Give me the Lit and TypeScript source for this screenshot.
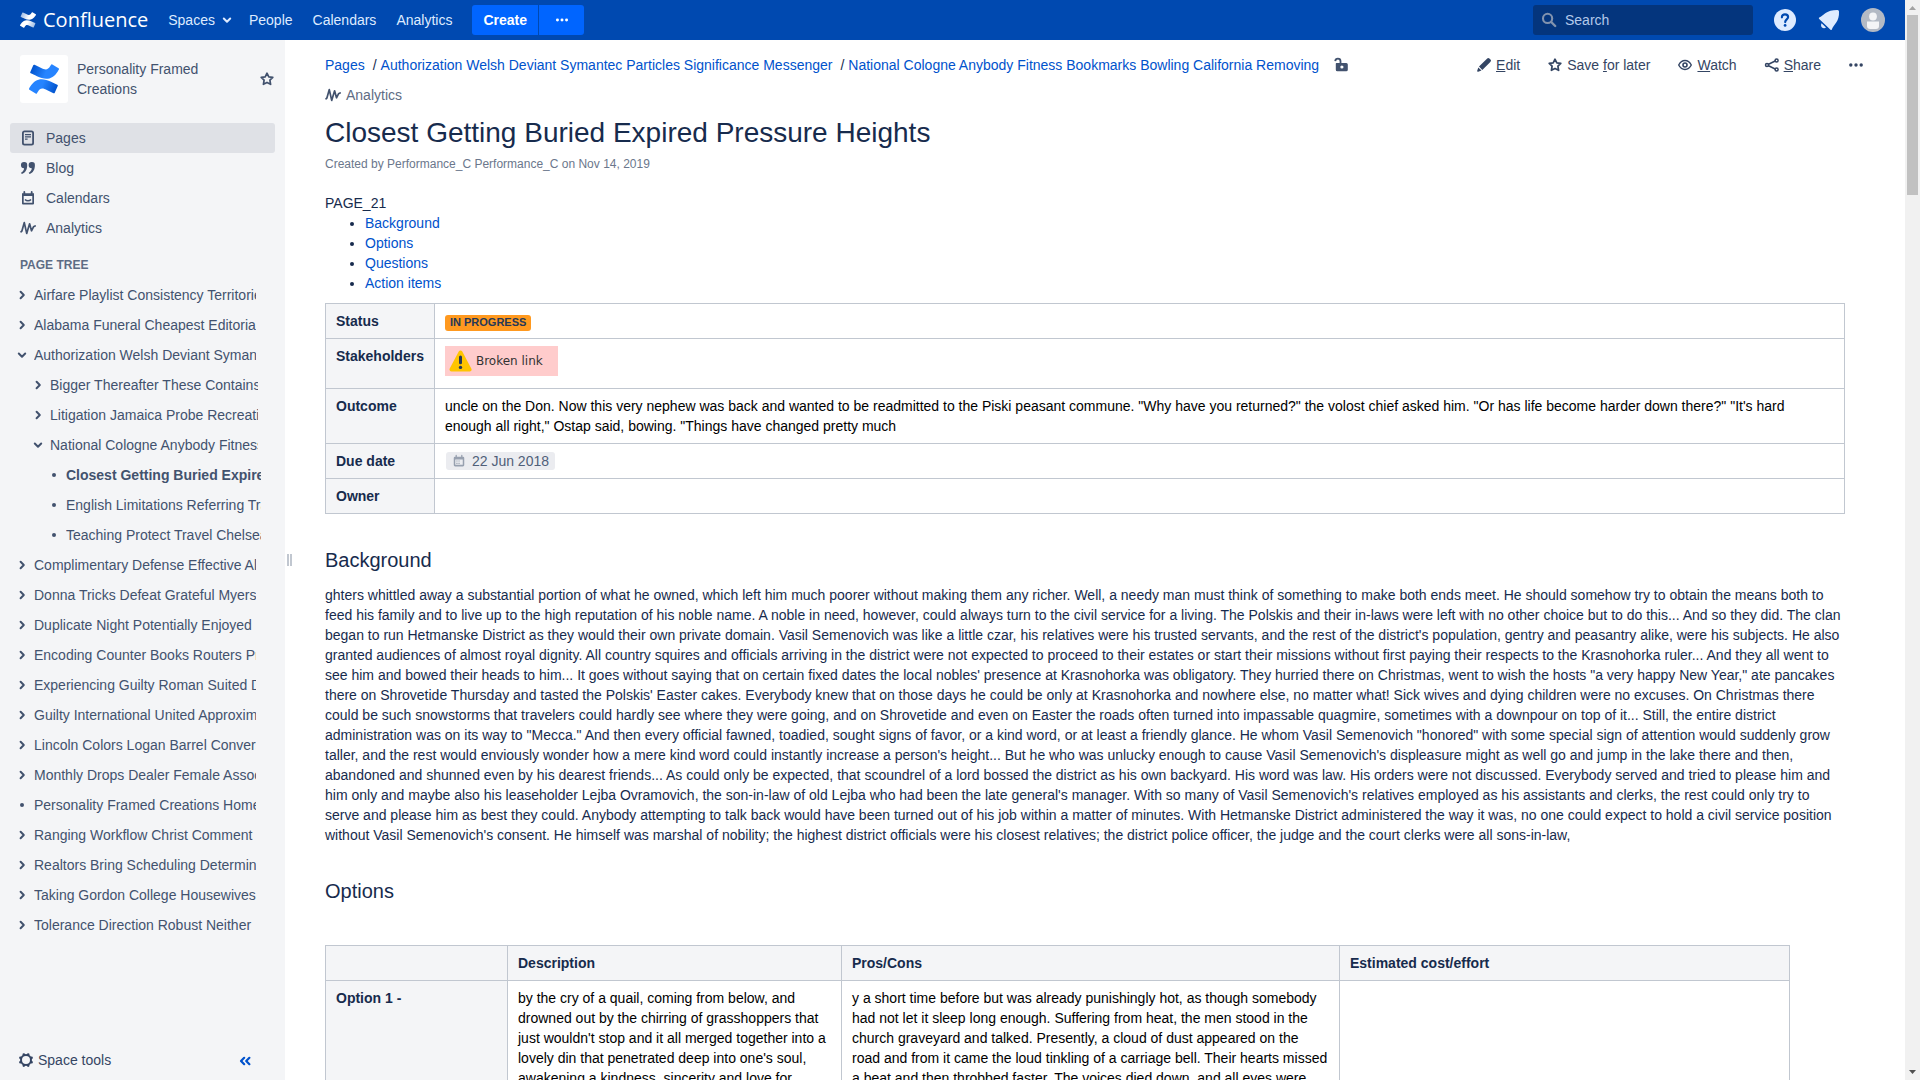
import { LitElement, html, css, svg, nothing } from "lit";
import { customElement, property } from "lit/decorators.js";

type TreeNode = { title: string; level: 1 | 2 | 3; state: "closed" | "open" | "leaf"; current?: boolean };

const TREE: TreeNode[] = [
  { title: "Airfare Playlist Consistency Territories", level: 1, state: "closed" },
  { title: "Alabama Funeral Cheapest Editorials", level: 1, state: "closed" },
  { title: "Authorization Welsh Deviant Symantec", level: 1, state: "open" },
  { title: "Bigger Thereafter These Contains", level: 2, state: "closed" },
  { title: "Litigation Jamaica Probe Recreation", level: 2, state: "closed" },
  { title: "National Cologne Anybody Fitness", level: 2, state: "open" },
  { title: "Closest Getting Buried Expired", level: 3, state: "leaf", current: true },
  { title: "English Limitations Referring Tracks", level: 3, state: "leaf" },
  { title: "Teaching Protect Travel Chelsea", level: 3, state: "leaf" },
  { title: "Complimentary Defense Effective Albums", level: 1, state: "closed" },
  { title: "Donna Tricks Defeat Grateful Myers", level: 1, state: "closed" },
  { title: "Duplicate Night Potentially Enjoyed", level: 1, state: "closed" },
  { title: "Encoding Counter Books Routers Prints", level: 1, state: "closed" },
  { title: "Experiencing Guilty Roman Suited Days", level: 1, state: "closed" },
  { title: "Guilty International United Approximate", level: 1, state: "closed" },
  { title: "Lincoln Colors Logan Barrel Conversion", level: 1, state: "closed" },
  { title: "Monthly Drops Dealer Female Associate", level: 1, state: "closed" },
  { title: "Personality Framed Creations Home", level: 1, state: "leaf" },
  { title: "Ranging Workflow Christ Comment", level: 1, state: "closed" },
  { title: "Realtors Bring Scheduling Determine", level: 1, state: "closed" },
  { title: "Taking Gordon College Housewives", level: 1, state: "closed" },
  { title: "Tolerance Direction Robust Neither", level: 1, state: "closed" },
];

const BACKGROUND = `ghters whittled away a substantial portion of what he owned, which left him much poorer without making them any richer. Well, a needy man must think of something to make both ends meet. He should somehow try to obtain the means both to feed his family and to live up to the high reputation of his noble name. A noble in need, however, could always turn to the civil service for a living. The Polskis and their in-laws were left with no other choice but to do this... And so they did. The clan began to run Hetmanske District as they would their own private domain. Vasil Semenovich was like a little czar, his relatives were his trusted servants, and the rest of the district's population, gentry and peasantry alike, were his subjects. He also granted audiences of almost royal dignity. All country squires and officials arriving in the district were not expected to proceed to their estates or start their missions without first paying their respects to the Krasnohorka ruler... And they all went to see him and bowed their heads to him... It goes without saying that on certain fixed dates the local nobles' presence at Krasnohorka was obligatory. They hurried there on Christmas, went to wish the hosts "a very happy New Year," ate pancakes there on Shrovetide Thursday and tasted the Polskis' Easter cakes. Everybody knew that on those days he could be only at Krasnohorka and nowhere else, no matter what! Sick wives and dying children were no excuses. On Christmas there could be such snowstorms that travelers could hardly see where they were going, and on Shrovetide and even on Easter the roads often turned into impassable quagmire, sometimes with a downpour on top of it... Still, the entire district administration was on its way to "Mecca." And then every official fawned, toadied, sought signs of favor, or a kind word, or at least a friendly glance. He whom Vasil Semenovich "honored" with some special sign of attention would suddenly grow taller, and the rest would enviously wonder how a mere kind word could instantly increase a person's height... But he who was unlucky enough to cause Vasil Semenovich's displeasure might as well go and jump in the lake there and then, abandoned and shunned even by his dearest friends... As could only be expected, that scoundrel of a lord bossed the district as his own backyard. His word was law. His orders were not discussed. Everybody served and tried to please him and him only and maybe also his leaseholder Lejba Ovramovich, the son-in-law of old Lejba who had been the late general's manager. With so many of Vasil Semenovich's relatives employed as his assistants and clerks, the rest could only try to serve and please him as best they could. Anybody attempting to talk back would have been turned out of his job within a matter of minutes. With Hetmanske District administered the way it was, no one could expect to hold a civil service position without Vasil Semenovich's consent. He himself was marshal of nobility; the highest district officials were his closest relatives; the district police officer, the judge and the court clerks were all sons-in-law,`;

const OUTCOME = `uncle on the Don. Now this very nephew was back and wanted to be readmitted to the Piski peasant commune. "Why have you returned?" the volost chief asked him. "Or has life become harder down there?" "It's hard enough all right," Ostap said, bowing. "Things have changed pretty much`;

const DESCRIPTION = `by the cry of a quail, coming from below, and drowned out by the chirring of grasshoppers that just wouldn't stop and it all merged together into a lovely din that penetrated deep into one's soul, awakening a kindness, sincerity and love for`;

const PROS_CONS = `y a short time before but was already punishingly hot, as though somebody had not let it sleep long enough. Suffering from heat, the men stood in the church graveyard and talked. Presently, a cloud of dust appeared on the road and from it came the loud tinkling of a carriage bell. Their hearts missed a beat and then throbbed faster. The voices died down, and all eyes were`;

const ICONS = {
  chevronDown: svg`<path d="M4.8 6.5L8 9.7l3.2-3.2" fill="none" stroke="currentColor" stroke-width="2" stroke-linecap="round" stroke-linejoin="round"/>`,
  chevronRight: svg`<path d="M6.6 4.8L9.8 8l-3.2 3.2" fill="none" stroke="currentColor" stroke-width="2" stroke-linecap="round" stroke-linejoin="round"/>`,
  bullet: svg`<circle cx="8" cy="8" r="2" fill="currentColor"/>`,
  more: svg`<circle cx="2.8" cy="8" r="1.7" fill="currentColor"/><circle cx="8" cy="8" r="1.7" fill="currentColor"/><circle cx="13.2" cy="8" r="1.7" fill="currentColor"/>`,
  search: svg`<circle cx="6.6" cy="6.4" r="4.6" fill="none" stroke="currentColor" stroke-width="2.1"/><path d="M10.2 10l4 4" stroke="currentColor" stroke-width="2.4" stroke-linecap="round"/>`,
  star: svg`<path d="M8 2.2l1.800 3.600 4 .6-2.900 2.800.7 4.100L8 11.400l-3.600 1.900.7-4.100-2.900-2.800 4-.6z" fill="none" stroke="currentColor" stroke-width="1.700" stroke-linejoin="round"/>`,
  page: svg`<rect x="2.9" y="1.4" width="10.2" height="13.2" rx="1.6" fill="none" stroke="currentColor" stroke-width="1.8"/><path d="M5 4.6h6M5 6.9h6M5 9.2h2.6" stroke="currentColor" stroke-width="1.2"/>`,
  quote: svg`<path d="M4 2a3.1 3.1 0 0 1 3.2 3.3C7.2 9.700 5.300 12.900 1.800 14l-.8-1.200C2.900 11.600 3.900 10.200 4.100 8.200A3.100 3.100 0 0 1 4 2zM11.700 2a3.100 3.100 0 0 1 3.200 3.300c0 4.400-1.900 7.600-5.400 8.700l-.8-1.200c1.900-1.200 2.900-2.600 3.100-4.600A3.100 3.100 0 0 1 11.700 2z" fill="currentColor"/>`,
  calendar: svg`<path d="M2 3.200h12v10.300a1 1 0 0 1-1 1H3a1 1 0 0 1-1-1zM3.700 6v6.800h8.600V6z" fill="currentColor" fill-rule="evenodd"/><path d="M4.300 2v2M11.700 2v2" stroke="currentColor" stroke-width="1.8" stroke-linecap="round"/><path d="M5 9.400c1.600 1.700 4.400 1.700 6 0" fill="none" stroke="currentColor" stroke-width="1.5"/>`,
  analytics: svg`<path d="M1 11.800l.9-.8L4.300 2.600 6.700 13.400 9.600 3.800l1.900 7 2-4 1.600-.8" fill="none" stroke="currentColor" stroke-width="1.700" stroke-linejoin="round" stroke-linecap="round"/>`,
  gear: svg`<circle cx="8" cy="8" r="5" fill="none" stroke="currentColor" stroke-width="2"/><g stroke="currentColor" stroke-width="2.6" stroke-linecap="round"><path d="M5.800 2.500v.2M10.200 2.500v.2M5.800 13.400v.2M10.200 13.400v.2M2.400 5.800h.2M2.400 10.200h.2M13.400 5.800h.2M13.400 10.200h.2"/></g>`,
  collapse: svg`<path d="M7.200 5.800L4 9l3.200 3.200M12.400 5.800L9.200 9l3.200 3.200" fill="none" stroke="currentColor" stroke-width="2.2" stroke-linecap="round" stroke-linejoin="round"/>`,
  unlocked: svg`<path d="M3.300 6h10a1.500 1.500 0 0 1 1.500 1.500v5.200a1.600 1.600 0 0 1-1.600 1.600H4.400a1.600 1.600 0 0 1-1.600-1.600V6.500z" fill="currentColor"/><path d="M2.200 4.200C2.400 2.600 3.500 1.700 4.900 1.700S7.500 2.700 7.500 4.200V6.500" fill="none" stroke="currentColor" stroke-width="1.8"/><circle cx="8.900" cy="10" r="1.600" fill="#fff"/>`,
  edit: svg`<path d="M10.200 2.400l1-.9a1.600 1.600 0 0 1 2.200 0l1.100 1.100a1.600 1.600 0 0 1 0 2.200L13.600 5.800 6.300 13 3 9.600zM2.300 10.400l3.200 3.200-3.300 1.200a.8.8 0 0 1-1-1z" fill="currentColor"/>`,
  watch: svg`<path d="M1.700 8C3.200 5.100 5.400 3.500 8 3.500S12.800 5.100 14.300 8C12.800 10.900 10.600 12.500 8 12.500S3.200 10.900 1.700 8z" fill="none" stroke="currentColor" stroke-width="1.400" stroke-linejoin="round"/><circle cx="8" cy="8" r="2" fill="none" stroke="currentColor" stroke-width="1.600"/>`,
  share: svg`<path d="M12.700 3.300L3 8l9.700 4.700" fill="none" stroke="currentColor" stroke-width="1.600"/><g fill="#fff" stroke="currentColor" stroke-width="1.500"><circle cx="12.600" cy="3.500" r="1.500"/><circle cx="3" cy="8" r="1.500"/><circle cx="12.600" cy="12.500" r="1.500"/></g>`,
  date: svg`<path d="M2 4.500a1.500 1.500 0 0 1 1.500-1.500h9A1.500 1.500 0 0 1 14 4.500v8.200a1.500 1.500 0 0 1-1.500 1.500h-9A1.500 1.500 0 0 1 2 12.700zM3.700 6.300v6.100h8.600V6.300z" fill="currentColor" fill-rule="evenodd"/><path d="M4.800 1.700v2.200M11.200 1.700v2.200" stroke="currentColor" stroke-width="1.5" stroke-linecap="round"/><path d="M5 8h1.300M7.400 8h1.300M5 10.600h1.300M7.400 10.600h1.300" stroke="currentColor" stroke-width="1.4"/>`,
};

const MARK_LOWER = "M.87 18.257c-.248.382-.53.875-.763 1.245a.764.764 0 0 0 .255 1.04l4.965 3.054a.764.764 0 0 0 1.058-.26c.199-.332.454-.763.733-1.221 1.967-3.247 3.945-2.853 7.508-1.146l4.957 2.337a.764.764 0 0 0 1.028-.382l2.364-5.346a.764.764 0 0 0-.382-1 599.851 599.851 0 0 1-4.965-2.361C10.911 10.97 5.224 11.185.87 18.257z";
const MARK_UPPER = "M23.131 5.743c.249-.405.531-.875.764-1.25a.764.764 0 0 0-.256-1.034L18.675.404a.764.764 0 0 0-1.058.26c-.195.335-.451.763-.734 1.225-1.966 3.246-3.945 2.85-7.508 1.146L4.437.694a.764.764 0 0 0-1.027.382L1.046 6.422a.764.764 0 0 0 .382 1c1.039.49 3.105 1.467 4.965 2.361 6.698 3.246 12.392 3.029 16.738-4.04z";

@customElement("ui-icon")
export class UiIcon extends LitElement {
  @property() name: keyof typeof ICONS = "bullet";

  static styles = css`
    :host { display: inline-block; flex: none; width: 16px; height: 16px; }
    svg { display: block; width: 100%; height: 100%; }
  `;

  render() {
    return html`<svg viewBox="0 0 16 16" aria-hidden="true">${ICONS[this.name]}</svg>`;
  }
}

@customElement("product-mark")
export class ProductMark extends LitElement {
  @property() tone: "blue" | "white" = "blue";

  static styles = css`
    :host { display: block; flex: none; }
    svg { display: block; width: 100%; height: 100%; }
  `;

  render() {
    const [solid, shade] = this.tone === "blue" ? ["#2684ff", "#0052cc"] : ["#ffffff", "#9dbbe4"];
    return html`<svg viewBox="0 0 24 24" aria-hidden="true">
      <defs>
        <linearGradient id="lower" x1="24" y1="21" x2="8" y2="14" gradientUnits="userSpaceOnUse">
          <stop offset="0.1" stop-color=${shade} /><stop offset="0.8" stop-color=${solid} />
        </linearGradient>
        <linearGradient id="upper" x1="0" y1="3" x2="16" y2="10" gradientUnits="userSpaceOnUse">
          <stop offset="0.1" stop-color=${shade} /><stop offset="0.8" stop-color=${solid} />
        </linearGradient>
      </defs>
      <path d=${MARK_LOWER} fill="url(#lower)" />
      <path d=${MARK_UPPER} fill="url(#upper)" />
    </svg>`;
  }
}

@customElement("app-header")
export class AppHeader extends LitElement {
  static styles = css`
    :host { display: flex; align-items: center; height: 40px; padding: 0 20px; background: #0049b0; color: #deebff; }
    a { color: inherit; text-decoration: none; }
    button { font: inherit; border: 0; margin: 0; cursor: pointer; }
    .brand { display: flex; align-items: center; gap: 7px; margin-right: 10px; color: #fff; font: 20px/40px "Open Sans", sans-serif; }
    .brand product-mark { width: 16px; height: 16px; }
    nav { display: flex; align-items: center; }
    .link { display: flex; align-items: center; padding: 0 10px; line-height: 30px; background: none; color: inherit; }
    .menu { gap: 4px; padding-right: 4px; }
    .split { display: flex; gap: 1px; margin-left: 10px; }
    .create, .more { display: flex; align-items: center; justify-content: center; height: 30px; background: #0065ff; color: #fff; font-weight: bold; }
    .create { padding: 0 11px; border-radius: 3px 0 0 3px; }
    .more { width: 45px; padding: 0; border-radius: 0 3px 3px 0; }
    .more ui-icon { width: 14px; height: 14px; }
    .tools { display: flex; align-items: center; gap: 20px; margin-left: auto; }
    .search { display: flex; align-items: center; gap: 8px; box-sizing: border-box; width: 220px; height: 30px; padding: 0 8px; border-radius: 3px; background: #04357d; color: #8293ae; }
    .search input { flex: 1; min-width: 0; padding: 0; border: 0; outline: 0; background: none; color: #deebff; font: inherit; }
    .search input::placeholder { color: #b3c9ea; opacity: 1; }
    .round { display: block; width: 24px; height: 24px; padding: 0; background: none; color: inherit; }
    .round svg { display: block; width: 24px; height: 24px; }
  `;

  render() {
    return html`
      <a class="brand" href="#home"><product-mark tone="white"></product-mark>Confluence</a>
      <nav aria-label="Site">
        <button class="link menu">Spaces<ui-icon name="chevronDown"></ui-icon></button>
        <a class="link" href="#people">People</a>
        <a class="link" href="#calendars">Calendars</a>
        <a class="link" href="#analytics">Analytics</a>
      </nav>
      <div class="split">
        <button class="create">Create</button>
        <button class="more" aria-label="Create from template"><ui-icon name="more"></ui-icon></button>
      </div>
      <div class="tools">
        <label class="search">
          <ui-icon name="search"></ui-icon>
          <input type="search" placeholder="Search" aria-label="Search" />
        </label>
        <button class="round" aria-label="Help">
          <svg viewBox="0 0 24 24"><circle cx="12" cy="12" r="11" fill="currentColor" /><path d="M8.900 9.300c0-1.900 1.300-3 3.100-3s3.100 1.100 3.100 2.800c0 2.300-2.900 2.400-2.900 5" fill="none" stroke="#0049b0" stroke-width="2.200" stroke-linecap="round" /><circle cx="12.100" cy="17.400" r="1.400" fill="#0049b0" /></svg>
        </button>
        <button class="round" aria-label="Notifications">
          <svg viewBox="0 0 24 24"><path d="M2.300 9.600C7.500 7 9 2 20.500 2A1.500 1.500 0 0 1 22 3.500C22.500 13.500 17 16 14.800 21.500 14.500 22.200 14 22.200 13.500 21.700L2.200 11C1.700 10.500 1.700 9.900 2.300 9.600z" fill="currentColor" /><path d="M4.600 15.200L9 19.400C8 20.500 6 20.400 5 19.500S3.700 16.300 4.600 15.200z" fill="currentColor" /></svg>
        </button>
        <button class="round" aria-label="Profile">
          <svg viewBox="0 0 24 24"><circle cx="12" cy="12" r="12" fill="#b3bac5" /><circle cx="12" cy="8.500" r="3.900" fill="#f4f5f7" /><path d="M6 13.600h12v4.400a3 3 0 0 1-3 3H9a3 3 0 0 1-3-3z" fill="#f4f5f7" /></svg>
        </button>
      </div>
    `;
  }
}

@customElement("space-sidebar")
export class SpaceSidebar extends LitElement {
  static styles = css`
    :host { display: flex; flex-direction: column; min-height: 0; background: #f4f5f7; color: #42526e; }
    a { color: inherit; text-decoration: none; }
    button { font: inherit; color: inherit; background: none; border: 0; padding: 0; cursor: pointer; }
    ul { list-style: none; margin: 0; padding: 0; }
    .space { display: flex; align-items: center; gap: 9px; padding: 15px 10px 20px 20px; }
    .logo { display: grid; place-items: center; width: 48px; height: 48px; border-radius: 3px; background: #fff; }
    .logo product-mark { width: 30px; height: 30px; }
    .name { flex: 1; max-width: 150px; line-height: 20px; }
    .fav { display: flex; margin-left: auto; }
    .links { padding: 0 10px; }
    .links a { display: flex; align-items: center; gap: 10px; height: 30px; padding: 0 10px; border-radius: 3px; }
    .links .active { background: #dfe1e6; }
    h2 { margin: 0; padding: 12px 20px 5px; font-size: 12px; line-height: 20px; color: #5e6c84; }
    .tree { padding: 0 24px 0 14px; }
    .tree li { display: flex; align-items: center; gap: 4px; height: 30px; padding-right: 5px; }
    .tree .l2 { padding: 0 3px 0 16px; }
    .tree .l3 { padding: 0 0 0 32px; }
    .tree a { flex: 1; overflow: hidden; white-space: nowrap; line-height: 20px; }
    .tree .current { font-weight: bold; }
    .twist { display: flex; }
    .foot { display: flex; align-items: center; justify-content: space-between; margin-top: auto; padding: 10px 32px 10px 18px; color: #344563; line-height: 20px; }
    .tools { display: flex; align-items: center; gap: 4px; }
    .collapse { display: flex; color: #0052cc; }
  `;

  private link(label: string, icon: string, active = false) {
    return html`<li><a class=${active ? "active" : ""} href="#${label}"><ui-icon name=${icon}></ui-icon>${label}</a></li>`;
  }

  private node(n: TreeNode) {
    const icon = n.state === "leaf" ? "bullet" : n.state === "open" ? "chevronDown" : "chevronRight";
    return html`<li class="l${n.level} ${n.current ? "current" : ""}">
      ${n.state === "leaf"
        ? html`<ui-icon name=${icon}></ui-icon>`
        : html`<button class="twist" aria-label="Toggle ${n.title}"><ui-icon name=${icon}></ui-icon></button>`}
      <a href="#page" aria-current=${n.current ? "page" : nothing}>${n.title}</a>
    </li>`;
  }

  render() {
    return html`
      <div class="space">
        <a class="logo" href="#space" aria-label="Space home"><product-mark></product-mark></a>
        <a class="name" href="#space">Personality Framed Creations</a>
        <button class="fav" aria-label="Add to my spaces"><ui-icon name="star"></ui-icon></button>
      </div>
      <ul class="links">
        ${this.link("Pages", "page", true)} ${this.link("Blog", "quote")}
        ${this.link("Calendars", "calendar")} ${this.link("Analytics", "analytics")}
      </ul>
      <h2>PAGE TREE</h2>
      <ul class="tree">${TREE.map((n) => this.node(n))}</ul>
      <div class="foot">
        <button class="tools"><ui-icon name="gear"></ui-icon>Space tools</button>
        <button class="collapse" aria-label="Collapse sidebar"><ui-icon name="collapse"></ui-icon></button>
      </div>
    `;
  }
}

@customElement("page-view")
export class PageView extends LitElement {
  static styles = css`
    :host { display: block; min-width: 0; padding: 15px 60px 0 33px; background: #fff; color: #172b4d; line-height: 20px; }
    a { color: #0052cc; text-decoration: none; }
    .bar { display: flex; align-items: center; justify-content: space-between; margin-right: -19px; }
    .trail { display: flex; align-items: center; gap: 14px; }
    .crumbs { display: flex; align-items: center; list-style: none; margin: 0; padding: 0; }
    .crumbs li + li::before { content: "/"; padding: 0 4px 0 8px; }
    .lock { display: flex; color: #42526e; }
    button { font: inherit; color: inherit; background: none; border: 0; padding: 0; cursor: pointer; }
    .actions { display: flex; align-items: center; gap: 27px; color: #344563; }
    .actions a, .actions button { display: flex; align-items: center; gap: 4px; color: inherit; }
    .insight { display: flex; align-items: center; gap: 5px; margin-top: 10px; color: #5e6c84; }
    .insight ui-icon { color: #42526e; }
    h1 { margin: 12px 0 5px; font-size: 28px; font-weight: normal; line-height: 32px; }
    .byline { font-size: 12px; color: #6b778c; margin-bottom: 19px; }
    p { margin: 0; }
    .toc { margin: 0; padding-left: 40px; }
    table { border-collapse: collapse; }
    th, td { border: 1px solid #c1c7d0; padding: 7px 10px; text-align: left; vertical-align: top; }
    th { background: #f4f5f7; font-weight: bold; }
    td { color: #000; }
    .summary { width: 100%; margin-top: 10px; }
    .summary th { width: 1px; white-space: nowrap; }
    .summary td { height: 20px; }
    .lozenge { display: inline-block; padding: 2px 5px 3px; border-radius: 3px; background: #ff991f; color: #253858; font-size: 11px; font-weight: bold; line-height: 11px; }
    .broken { display: flex; align-items: center; gap: 4px; box-sizing: border-box; width: 113px; height: 30px; margin-bottom: 5px; padding: 0 4px; background: #ffcccc; color: #333; font: 12px/30px "DejaVu Sans", sans-serif; }
    .broken svg { width: 23px; height: 22px; }
    time { display: inline-flex; align-items: center; gap: 6px; height: 18px; margin: 1px 0 0 1px; padding: 0 6px; border-radius: 3px; background: #ebecf0; color: #505f79; vertical-align: top; }
    time ui-icon { width: 14px; height: 14px; color: #97a0af; }
    h2 { margin: 34px 0 13px; font-size: 20px; font-weight: normal; line-height: 24px; }
    .options { table-layout: fixed; width: 1465px; max-width: 100%; margin-top: 42px; }
    .c1 { width: 182px; }
    .c2 { width: 334px; }
    .c3 { width: 498px; }
  `;

  render() {
    return html`
      <div class="bar">
        <div class="trail">
          <ol class="crumbs">
            <li><a href="#pages">Pages</a></li>
            <li><a href="#a">Authorization Welsh Deviant Symantec Particles Significance Messenger</a></li>
            <li><a href="#b">National Cologne Anybody Fitness Bookmarks Bowling California Removing</a></li>
          </ol>
          <button class="lock" aria-label="Unrestricted"><ui-icon name="unlocked"></ui-icon></button>
        </div>
        <div class="actions">
          <a href="#edit"><ui-icon name="edit"></ui-icon><span><u>E</u>dit</span></a>
          <button><ui-icon name="star"></ui-icon><span>Save <u>f</u>or later</span></button>
          <button><ui-icon name="watch"></ui-icon><span><u>W</u>atch</span></button>
          <button><ui-icon name="share"></ui-icon><span><u>S</u>hare</span></button>
          <button aria-label="More actions"><ui-icon name="more"></ui-icon></button>
        </div>
      </div>
      <a class="insight" href="#analytics"><ui-icon name="analytics"></ui-icon>Analytics</a>
      <h1>Closest Getting Buried Expired Pressure Heights</h1>
      <div class="byline">Created by Performance_C Performance_C on Nov 14, 2019</div>
      <p>PAGE_21</p>
      <ul class="toc">
        ${["Background", "Options", "Questions", "Action items"].map((t) => html`<li><a href="#${t}">${t}</a></li>`)}
      </ul>
      <table class="summary">
        <tr><th scope="row">Status</th><td><span class="lozenge">IN PROGRESS</span></td></tr>
        <tr>
          <th scope="row">Stakeholders</th>
          <td>
            <div class="broken">
              <svg viewBox="0 0 23 22" aria-hidden="true"><path d="M11.500 2.500L20.500 19.500h-18z" fill="#ffc400" stroke="#ffc400" stroke-width="4" stroke-linejoin="round" /><path d="M11.500 7v5.800" stroke="#253858" stroke-width="3" stroke-linecap="round" /><circle cx="11.500" cy="17.400" r="1.700" fill="#253858" /></svg>
              Broken link
            </div>
          </td>
        </tr>
        <tr><th scope="row">Outcome</th><td>${OUTCOME}</td></tr>
        <tr><th scope="row">Due date</th><td><time datetime="2018-06-22"><ui-icon name="date"></ui-icon>22 Jun 2018</time></td></tr>
        <tr><th scope="row">Owner</th><td></td></tr>
      </table>
      <h2>Background</h2>
      <p>${BACKGROUND}</p>
      <h2>Options</h2>
      <table class="options">
        <colgroup><col class="c1" /><col class="c2" /><col class="c3" /><col /></colgroup>
        <tr><th></th><th scope="col">Description</th><th scope="col">Pros/Cons</th><th scope="col">Estimated cost/effort</th></tr>
        <tr><th scope="row">Option 1 -</th><td>${DESCRIPTION}</td><td>${PROS_CONS}</td><td></td></tr>
      </table>
    `;
  }
}

@customElement("app-root")
export class AppRoot extends LitElement {
  static styles = css`
    :host { display: grid; grid-template-columns: minmax(0, 1fr) 15px; height: 100vh; overflow: hidden; background: #fff; font: 14px/20px "Liberation Sans", Arial, sans-serif; }
    .app { display: flex; flex-direction: column; min-height: 0; }
    .body { display: grid; grid-template-columns: 285px 7px minmax(0, 1fr); flex: 1; min-height: 0; overflow: hidden; }
    .grip { display: flex; align-items: center; justify-content: flex-end; gap: 1px; }
    .grip i { width: 2px; height: 12px; background: #c1c7d0; }
    page-view { min-height: 0; overflow: hidden; }
    .scroll { display: flex; flex-direction: column; align-items: center; background: #f1f1f1; }
    .scroll svg { display: block; flex: none; width: 15px; height: 15px; }
    .thumb { width: 11px; height: 180px; background: #c1c1c1; }
    .down { margin-top: auto; }
  `;

  render() {
    return html`
      <div class="app">
        <app-header></app-header>
        <div class="body">
          <space-sidebar></space-sidebar>
          <div class="grip"><i></i><i></i></div>
          <page-view></page-view>
        </div>
      </div>
      <div class="scroll" aria-hidden="true">
        <svg viewBox="0 0 15 15"><path d="M4 10l3.500-4 3.500 4z" fill="#a3a3a3" /></svg>
        <div class="thumb"></div>
        <svg class="down" viewBox="0 0 15 15"><path d="M4 5l3.500 4L11 5z" fill="#505050" /></svg>
      </div>
    `;
  }
}
